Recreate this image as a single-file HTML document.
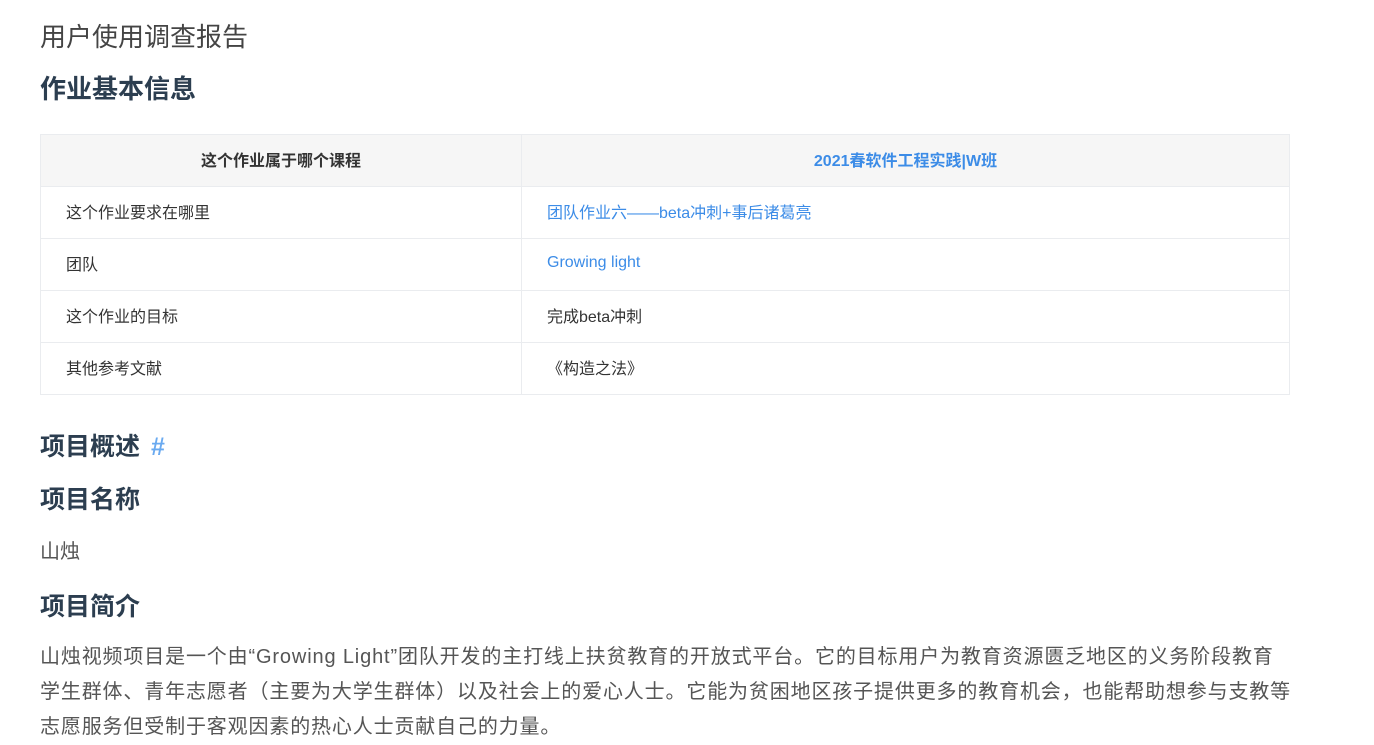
<!DOCTYPE html>
<html><head><meta charset="utf-8"><style>
body{margin:0;background:#fff;font-family:"Liberation Sans","Noto Sans CJK SC",sans-serif;color:#2c3e50;}
.a{position:absolute;white-space:nowrap;}
table{position:absolute;left:40px;top:134px;width:1250px;border-collapse:collapse;font-size:16px;}
td,th{border:1px solid #eaecef;height:52px;padding:0 0 3px 25px;text-align:left;color:#333;font-weight:normal;box-sizing:border-box;}
th{background:#f6f6f6;font-weight:bold;text-align:center;padding:0 0 3px 0;}
.l{color:#3c8ce7}
</style></head><body>
<div class="a" style="left:40px;top:17px;font-size:26px;color:#444;">用户使用调查报告</div>
<div class="a" style="left:40px;top:69px;font-size:26px;font-weight:bold;">作业基本信息</div>
<table>
<tr><th style="width:481px">这个作业属于哪个课程</th><th class="l" style="color:#3c8ce7">2021春软件工程实践|W班</th></tr>
<tr><td>这个作业要求在哪里</td><td class="l">团队作业六——beta冲刺+事后诸葛亮</td></tr>
<tr><td>团队</td><td class="l">Growing light</td></tr>
<tr><td>这个作业的目标</td><td>完成beta冲刺</td></tr>
<tr><td>其他参考文献</td><td>《构造之法》</td></tr>
</table>
<div class="a" style="left:40px;top:427px;font-size:25px;font-weight:bold;">项目概述 <span style="color:#6aaaf0;margin-left:4px">#</span></div>
<div class="a" style="left:40px;top:480px;font-size:25px;font-weight:bold;">项目名称</div>
<div class="a" style="left:40px;top:535px;font-size:20px;color:#555;">山烛</div>
<div class="a" style="left:40px;top:587px;font-size:25px;font-weight:bold;">项目简介</div>
<div class="a" style="left:40px;top:640px;font-size:20px;color:#555;line-height:35px;letter-spacing:0.85px;">山烛视频项目是一个由“Growing Light”团队开发的主打线上扶贫教育的开放式平台。它的目标用户为教育资源匮乏地区的义务阶段教育<br>学生群体、青年志愿者（主要为大学生群体）以及社会上的爱心人士。它能为贫困地区孩子提供更多的教育机会，也能帮助想参与支教等<br>志愿服务但受制于客观因素的热心人士贡献自己的力量。</div>
</body></html>
